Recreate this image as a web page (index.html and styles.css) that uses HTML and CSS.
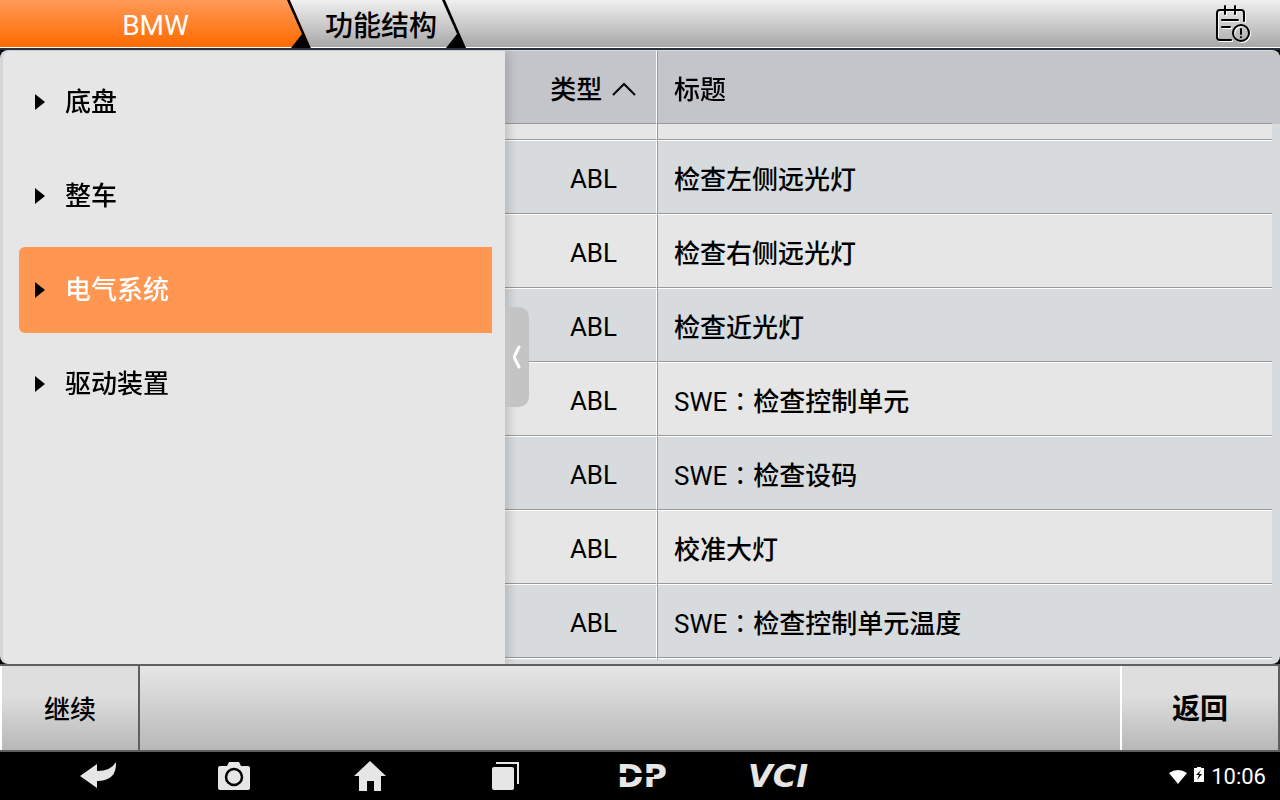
FILE: index.html
```html
<!DOCTYPE html>
<html lang="zh-CN">
<head>
    <meta charset="UTF-8">
    <meta name="viewport" content="width=device-width, initial-scale=1.0">
    <title>BMW 功能结构</title>
    <link rel="stylesheet" href="styles.css">
</head>
<body>
    <header class="topbar">
        <button class="tab tab-brand">BMW
            <svg class="tab-edge" width="24" height="48" viewBox="0 0 24 48"><path d="M0 0H3L24 48H4L15 34Z"/></svg>
        </button>
        <button class="tab tab-page">功能结构
            <svg class="tab-edge" width="24" height="48" viewBox="0 0 24 48"><path d="M0 0H3L24 48H4L15 34Z"/></svg>
        </button>
        <button class="report" aria-label="报告">
            <svg width="36" height="38" viewBox="0 0 36 38" fill="none" stroke-linecap="round">
                <g stroke="#fff" stroke-width="2" transform="translate(1 1)">
                    <path d="M6 5H5Q2 5 2 8V32Q2 35 5 35H16M13 5H18M24 5H26Q29 5 29 8V16M10 1V9M20 1V9M7 15H23M7 22H15"/>
                    <circle cx="26" cy="28" r="8"/>
                </g>
                <g stroke="#000" stroke-width="2">
                    <path d="M6 5H5Q2 5 2 8V32Q2 35 5 35H16M6 5H26Q29 5 29 8V16M10 1V9M20 1V9M7 15H23M7 22H15"/>
                    <circle cx="26" cy="28" r="8"/>
                    <path d="M26 24V29M26 32V32.200"/>
                </g>
            </svg>
        </button>
    </header>

    <main class="stage">
        <div class="panel">
            <nav class="sidebar">
                <button class="node">底盘</button>
                <button class="node">整车</button>
                <button class="node active">电气系统</button>
                <button class="node">驱动装置</button>
                <button class="collapse" aria-label="收起">
                    <svg width="10" height="24" viewBox="0 0 10 24"><path d="M7 2L3 10Q2 12 3 14L7 22" fill="none" stroke="#fff" stroke-width="3" stroke-linecap="round"/></svg>
                </button>
            </nav>
            <div class="list" id="list">
                <table>
                    <thead>
                        <tr>
                            <th class="type">类型
                                <svg width="26" height="14" viewBox="0 0 26 14"><path d="M2 13L13 2L24 13" fill="none" stroke="#000" stroke-width="2"/></svg>
                            </th>
                            <th>标题</th>
                        </tr>
                    </thead>
                    <tbody>
                        <tr><td class="type"></td><td></td></tr>
                        <tr><td class="type">ABL</td><td>检查左侧远光灯</td></tr>
                        <tr><td class="type">ABL</td><td>检查右侧远光灯</td></tr>
                        <tr><td class="type">ABL</td><td>检查近光灯</td></tr>
                        <tr><td class="type">ABL</td><td><span class="code" lang="zh-TW">SWE：</span>检查控制单元</td></tr>
                        <tr><td class="type">ABL</td><td><span class="code" lang="zh-TW">SWE：</span>检查设码</td></tr>
                        <tr><td class="type">ABL</td><td>校准大灯</td></tr>
                        <tr><td class="type">ABL</td><td><span class="code" lang="zh-TW">SWE：</span>检查控制单元温度</td></tr>
                        <tr><td class="type"></td><td></td></tr>
                    </tbody>
                </table>
            </div>
        </div>
    </main>

    <div class="actions">
        <button class="action next">继续</button>
        <button class="action back">返回</button>
    </div>

    <footer class="navbar">
        <button aria-label="后退">
            <svg width="38" height="28" viewBox="0 0 38 28"><path d="M1 14L18 2V9Q32 9 37 0Q38 19 18 19V26Z"/></svg>
        </button>
        <button aria-label="截屏">
            <svg width="32" height="28" viewBox="0 0 32 28"><path d="M2 4H9L11 0H21L23 4H30Q32 4 32 6V26Q32 28 30 28H2Q0 28 0 26V6Q0 4 2 4Z"/><circle cx="16" cy="15" r="8" fill="none" stroke="#000" stroke-width="2.500"/></svg>
        </button>
        <button aria-label="主页">
            <svg width="32" height="30" viewBox="0 0 32 30"><path d="M16 0L32 15H27V30H20V20H13V30H5V15H0Z"/></svg>
        </button>
        <button aria-label="最近任务">
            <svg width="28" height="28" viewBox="0 0 28 28"><rect y="5" width="22" height="23" rx="2"/><path d="M4 0H27V22H25V2H4Z"/></svg>
        </button>
        <button class="dp"><span>DP</span></button>
        <button class="vci">VCI</button>
        <div class="status">
            <svg width="18" height="14" viewBox="0 0 18 14"><path d="M0 3Q9 -3 18 3L9 14Z"/></svg>
            <svg class="battery" width="10" height="15" viewBox="0 0 10 15"><path d="M0 1H3V0H7V1H10V15H0Z"/><path d="M7 3L2 8H5L3 13L8 7H5Z" fill="#000"/></svg>
            <span>10:06</span>
        </div>
    </footer>

    <script>
        document.getElementById('list').scrollTop = 58;
    </script>
</body>
</html>
```
FILE: styles.css
```css
* {
    box-sizing: border-box;
}
body {
    margin: 0;
    height: 100vh;
    display: flex;
    flex-direction: column;
    background: #000;
    color: #000;
    font-family: Roboto, "Noto Sans CJK SC", sans-serif;
    font-size: 26px;
    line-height: 30px;
}
button {
    font: inherit;
    color: inherit;
    border: none;
    background: none;
    padding: 0;
    cursor: pointer;
}
svg {
    display: block;
}

/* top tabs */
.topbar {
    display: flex;
    height: 50px;
    flex-shrink: 0;
    background: linear-gradient(#f0f0f0, #a8a8a8 47px, #fff 47px, #fff 48px);
    border-bottom: 2px solid #29303c;
}
.tab {
    position: relative;
    padding-top: 4px;
    font-size: 28px;
}
.tab-edge {
    position: absolute;
    top: 0;
    right: 0;
}
.tab-brand {
    width: 311px;
    color: #fff;
    background: linear-gradient(#ff9a57, #ff6a00 47px, #fff 47px);
    clip-path: polygon(0 0, calc(100% - 21px) 0, 100% 100%, 0 100%);
}
.tab-page {
    width: 170px;
    margin-left: -15px;
    padding-top: 6px;
    font-weight: 500;
}
.report {
    margin-left: auto;
    margin-right: 29px;
}

/* tree and list */
.stage {
    flex: 1;
    min-height: 0;
    display: flex;
}
.panel {
    flex: 1;
    display: flex;
    padding-top: 1px;
    background: #d7dbde;
    border-radius: 8px;
    overflow: hidden;
}
.sidebar {
    position: relative;
    z-index: 2;
    width: 502px;
    flex-shrink: 0;
    margin-left: 3px;
    padding: 8px 13px 0 16px;
    display: flex;
    flex-direction: column;
    gap: 8px;
    background: #e6e6e6;
    border-radius: 8px 0 0 8px;
    box-shadow: 4px 0 10px rgba(0, 0, 0, 0.16);
}
.node {
    display: flex;
    align-items: center;
    height: 86px;
    padding-left: 16px;
    text-align: left;
    font-weight: 500;
}
.node::before {
    content: "";
    width: 10px;
    height: 16px;
    margin-right: 20px;
    background: #000;
    clip-path: polygon(0 0, 100% 50%, 0 100%);
}
.node.active {
    background: #ff9651;
    color: #fff;
    border-radius: 6px 0 0 6px;
}
.collapse {
    position: absolute;
    left: 100%;
    top: 256px;
    width: 24px;
    height: 100px;
    display: flex;
    align-items: center;
    justify-content: center;
    background: #c4c4c4;
    border-radius: 0 10px 10px 0;
}
.list {
    flex: 1;
    margin-bottom: 4px;
    padding-right: 8px;
    overflow: auto;
    scrollbar-width: none;
}
table {
    width: 100%;
    table-layout: fixed;
    border-collapse: separate;
    border-spacing: 0;
}
th, td {
    height: 74px;
    padding: 6px 16px 0 16px;
    text-align: left;
    font-weight: 500;
    border-left: 1px solid #999;
    border-top: 1px solid #fff;
    border-bottom: 1px solid #999;
}
th {
    position: sticky;
    top: 0;
    z-index: 1;
    height: 73px;
    background: #c4c5ca;
    border-top: none;
    box-shadow: 8px 0 0 #c4c5ca;
}
th.type, td.type {
    width: 152px;
    padding: 6px 0 0 26px;
    text-align: center;
    border-left: none;
    border-right: 1px solid #fff;
}
td.type {
    padding-top: 4px;
    font-weight: normal;
}
th.type {
    box-shadow: none;
}
th.type svg {
    display: inline-block;
    margin: 0 0 3px 2px;
}
.code {
    font-weight: normal;
}
tbody tr:nth-child(odd) {
    background: #e6e6e6;
}
tbody tr:nth-child(even) {
    background: #d7dbde;
}

/* bottom actions */
.actions {
    display: flex;
    justify-content: space-between;
    height: 88px;
    flex-shrink: 0;
    background: linear-gradient(#e6e6e6, #b8b8b8);
    border-top: 2px solid #5f5f5f;
    border-bottom: 2px solid #5f5f5f;
}
.action {
    padding-top: 4px;
    background: linear-gradient(#dedede 35%, #b8b8b8);
    border-left: 2px solid #fff;
    border-right: 2px solid #5f5f5f;
}
.next {
    width: 140px;
    font-weight: 500;
}
.back {
    width: 160px;
    font-size: 28px;
    font-weight: bold;
}

/* system bar */
.navbar {
    display: flex;
    height: 48px;
    flex-shrink: 0;
    padding: 0 14px 0 30px;
    background: #000;
    color: #e6e6e6;
    fill: #e6e6e6;
}
.navbar button {
    width: 136px;
    display: flex;
    align-items: center;
    justify-content: center;
    font: bold 32px "DejaVu Sans", sans-serif;
}
.navbar .vci {
    font-style: italic;
}
.dp span {
    position: relative;
}
.dp span::after {
    content: "";
    position: absolute;
    left: 0;
    top: 16px;
    width: 74%;
    height: 4px;
    background: #000;
}
.status {
    margin-left: auto;
    padding-top: 1px;
    display: flex;
    align-items: center;
    gap: 7px;
    font-size: 22px;
    color: #fff;
    fill: #fff;
}
.battery {
    margin-bottom: 4px;
}
```
